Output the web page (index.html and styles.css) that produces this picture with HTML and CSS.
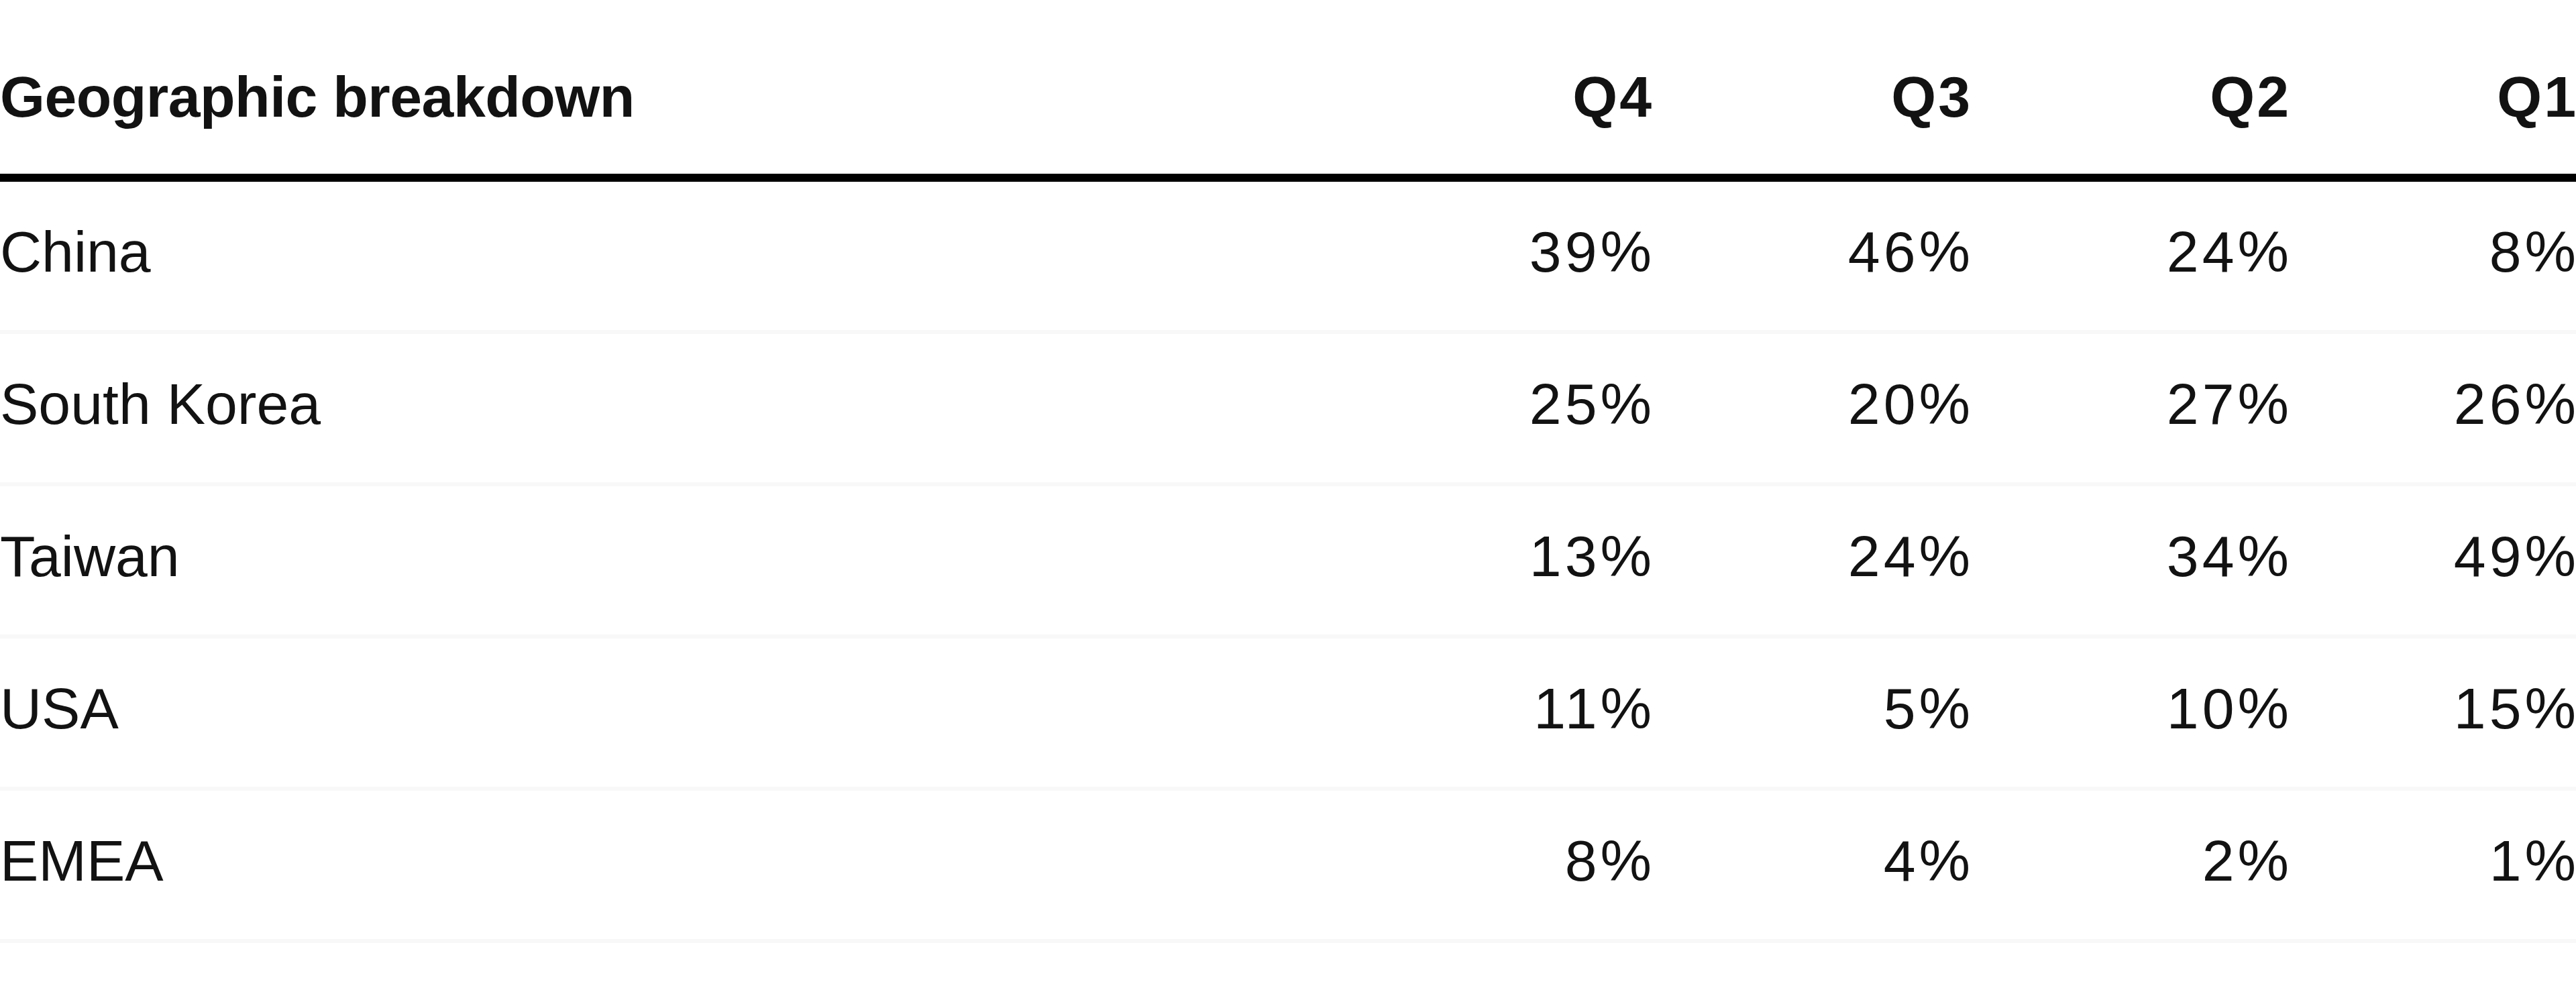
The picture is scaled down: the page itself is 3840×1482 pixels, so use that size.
FILE: index.html
```html
<!DOCTYPE html>
<html lang="en">
<head>
<meta charset="utf-8">
<title>Geographic breakdown</title>
<link rel="stylesheet" href="styles.css">
</head>
<body>
<table class="geo">
  <colgroup>
    <col class="c-name">
    <col class="c-q4">
    <col class="c-q">
    <col class="c-q">
    <col class="c-last">
  </colgroup>
  <thead>
    <tr>
      <th class="name">Geographic breakdown</th>
      <th class="num"><span class="val">Q4</span></th>
      <th class="num"><span class="val">Q3</span></th>
      <th class="num"><span class="val">Q2</span></th>
      <th class="num"><span class="val">Q1</span></th>
    </tr>
  </thead>
  <tbody>
    <tr><td class="name">China</td><td class="num"><span class="val">39%</span></td><td class="num"><span class="val">46%</span></td><td class="num"><span class="val">24%</span></td><td class="num"><span class="val">8%</span></td></tr>
    <tr><td class="name">South Korea</td><td class="num"><span class="val">25%</span></td><td class="num"><span class="val">20%</span></td><td class="num"><span class="val">27%</span></td><td class="num"><span class="val">26%</span></td></tr>
    <tr><td class="name">Taiwan</td><td class="num"><span class="val">13%</span></td><td class="num"><span class="val">24%</span></td><td class="num"><span class="val">34%</span></td><td class="num"><span class="val">49%</span></td></tr>
    <tr><td class="name">USA</td><td class="num"><span class="val">11%</span></td><td class="num"><span class="val">5%</span></td><td class="num"><span class="val">10%</span></td><td class="num"><span class="val">15%</span></td></tr>
    <tr><td class="name">EMEA</td><td class="num"><span class="val">8%</span></td><td class="num"><span class="val">4%</span></td><td class="num"><span class="val">2%</span></td><td class="num"><span class="val">1%</span></td></tr>
  </tbody>
</table>
</body>
</html>
```
FILE: styles.css
```css
html, body {
  margin: 0;
  padding: 0;
  background: #ffffff;
}

body {
  font-family: "Liberation Sans", Arial, Helvetica, sans-serif;
  color: #121212;
}

.geo {
  width: 3840px;
  table-layout: fixed;
  border-collapse: separate;
  border-spacing: 0;
}

.c-q4 { width: 475px; }
.c-q { width: 475px; }
.c-last { width: 428px; }

.geo th,
.geo td {
  padding: 0;
  font-size: 86px;
  line-height: 96px;
  white-space: nowrap;
}

.geo th {
  font-weight: 700;
  letter-spacing: -0.5px;
  padding-top: 96px;
  padding-bottom: 67px;
  border-bottom: 12px solid #000000;
}

.geo td {
  font-weight: 400;
  padding-top: 56px;
  padding-bottom: 69px;
  border-bottom: 6px solid #f8f8f8;
}

.name {
  text-align: left;
}

.num {
  text-align: right;
}

.geo td .val {
  letter-spacing: 5px;
  margin-right: -5px;
}

.geo th .val {
  letter-spacing: 3px;
  margin-right: -3px;
}
```
